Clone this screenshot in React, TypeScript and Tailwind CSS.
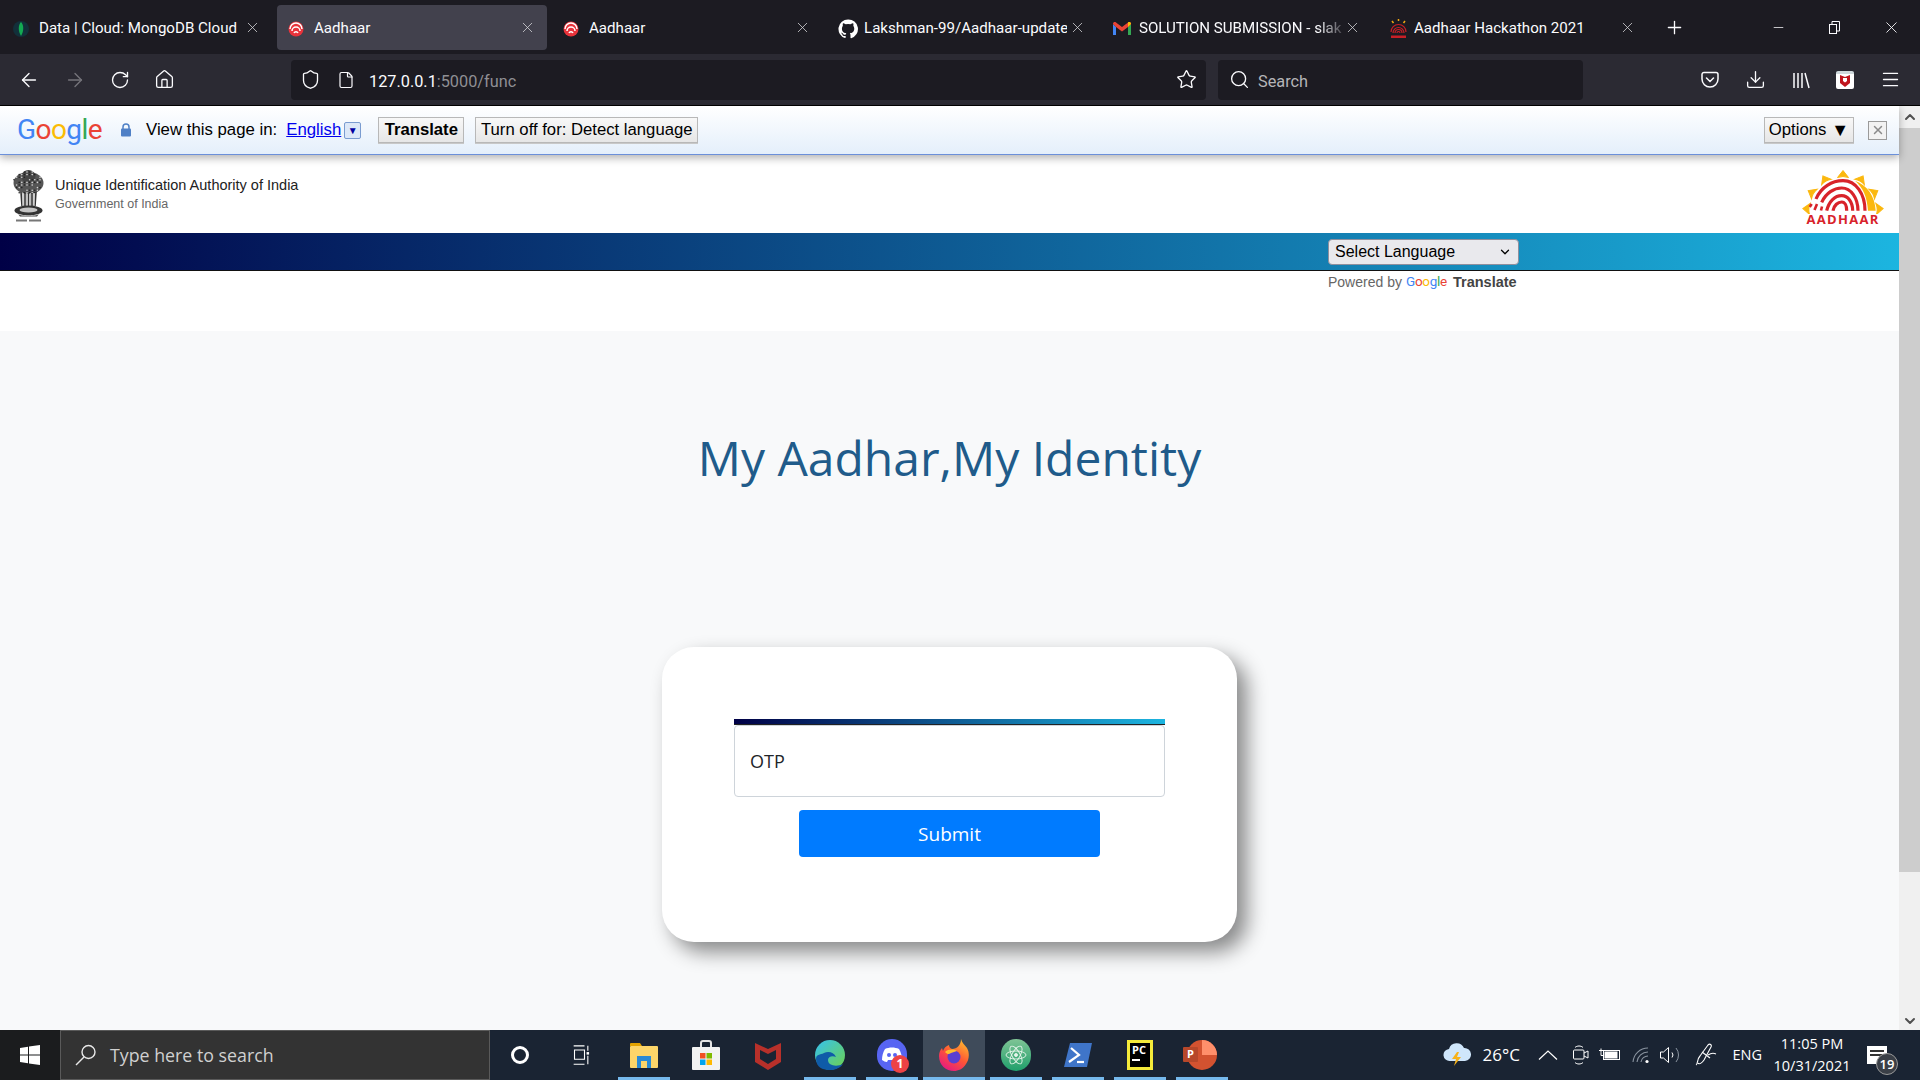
import React from "react";
import { ArrowLeft, ArrowRight, RotateCw, Home, Shield, File, Star, Search, X, Plus, Minus, Download, Menu, ChevronUp, ChevronDown } from "lucide-react";

const ui = "font-['Roboto',sans-serif]";
const arial = "font-['Liberation_Sans',Arial,sans-serif]";

function AadhaarFav() {
  return (
    <svg width="16" height="16" viewBox="0 0 16 16" fill="none">
      <circle cx="8" cy="8" r="7.5" fill="#e8333b" />
      <path d="M2 8a6 6 0 0 1 12 0M4 10a4 4 0 0 1 8 0M6 12a2.2 2.2 0 0 1 4 0" stroke="#fff" strokeWidth="1.5" />
    </svg>
  );
}
function Leaf() {
  return (
    <svg width="16" height="20" viewBox="0 0 16 20">
      <circle cx="8" cy="10" r="8" fill="#12303a" />
      <path d="M8 3c3 3 3 9 0 14c-3-5-3-11 0-14z" fill="#13aa52" />
    </svg>
  );
}
function GitHub() {
  return (
    <svg width="20" height="20" viewBox="0 0 24 24" fill="#fff">
      <path d="M12 .5a11.5 11.5 0 0 0-3.600 22.400c.600.100.800-.300.800-.600v-2c-3.200.700-3.900-1.500-3.900-1.500-.500-1.300-1.300-1.700-1.300-1.700-1-.700.100-.700.100-.700 1.200.100 1.800 1.200 1.800 1.200 1 1.800 2.800 1.300 3.400 1 .100-.800.400-1.300.700-1.600-2.600-.300-5.300-1.300-5.300-5.700 0-1.300.500-2.300 1.200-3.100-.100-.300-.500-1.500.100-3.100 0 0 1-.300 3.200 1.200a11 11 0 0 1 5.800 0c2.200-1.500 3.200-1.200 3.200-1.200.600 1.600.200 2.800.100 3.100.700.800 1.200 1.900 1.200 3.100 0 4.400-2.700 5.400-5.300 5.700.400.400.800 1.100.800 2.200v3.200c0 .300.200.700.800.600A11.500 11.500 0 0 0 12 .500z" />
    </svg>
  );
}
function Gmail() {
  return (
    <svg width="18" height="14" viewBox="0 0 18 14" fill="none">
      <path d="M0 2v11h3V5z" fill="#4285f4" />
      <path d="M15 5v8h3V2z" fill="#34a853" />
      <path d="M0 2c0-2 2-2.500 3-1.500L9 5l6-4.500c1-1 3-.5 3 1.500l-3 3-6 4.500L3 5z" fill="#ea4335" />
      <path d="M15 .5c1-1 3-.5 3 1.500l-3 3z" fill="#fbbc04" />
    </svg>
  );
}
function AadhaarSmall() {
  return (
    <svg width="21" height="21" viewBox="0 0 21 21" fill="none">
      <path d="M10.500 1v2M4 3l1.500 2M17 3l-1.500 2" stroke="#f3a712" strokeWidth="1.500" />
      <path d="M3 14a7.500 7.500 0 0 1 15 0M5 15a5.500 5.500 0 0 1 11 0M7 15a3.500 3.500 0 0 1 7 0M9 15a1.500 1.500 0 0 1 3 0" stroke="#c81f26" strokeWidth="1.200" />
      <rect x="3" y="17.500" width="15" height="2.500" fill="#c81f26" />
    </svg>
  );
}

const tabs: { icon: React.ReactNode; title: string; active?: boolean; fade?: boolean }[] = [
  { icon: <Leaf />, title: "Data | Cloud: MongoDB Cloud" },
  { icon: <AadhaarFav />, title: "Aadhaar", active: true },
  { icon: <AadhaarFav />, title: "Aadhaar" },
  { icon: <GitHub />, title: "Lakshman-99/Aadhaar-update" },
  { icon: <Gmail />, title: "SOLUTION SUBMISSION - slaks", fade: true },
  { icon: <AadhaarSmall />, title: "Aadhaar Hackathon 2021" },
];

function Tab({ icon, title, active, fade }: { icon: React.ReactNode; title: string; active?: boolean; fade?: boolean }) {
  return (
    <div className={`mr-[5px] flex h-[45px] w-[270px] shrink-0 items-center rounded-[4px] pl-[11px] pr-[11px] pt-[3px] ${active ? "bg-[#42414d]" : ""}`}>
      <span className="flex w-[26px] shrink-0 items-center justify-start">{icon}</span>
      <span className={`min-w-0 flex-1 overflow-hidden whitespace-nowrap text-[15.100px] text-[#fbfbfe] ${fade ? "[mask-image:linear-gradient(to_right,black_88%,rgba(0,0,0,0.2))]" : ""}`}>{title}</span>
      <X size={17} strokeWidth={1.100} className="-mt-[3px] ml-[2px] shrink-0 text-[#d8d8dc]" />
    </div>
  );
}

function Tabs() {
  return (
    <div className={`flex h-[54px] shrink-0 items-center bg-[#1c1b22] pl-[2px] ${ui}`}>
      {tabs.map((t, i) => (
        <Tab key={i} {...t} />
      ))}
      <Plus size={21} strokeWidth={1.500} className="ml-[12px] text-[#fbfbfe]" />
      <div className="ml-auto flex items-center text-[#fbfbfe]">
        <span className="flex w-[56px] justify-center"><Minus size={15} strokeWidth={1.200} /></span>
        <span className="flex w-[56px] justify-center">
          <svg width="13" height="13" viewBox="0 0 13 13" fill="none" stroke="#fbfbfe"><rect x="1.500" y="3.500" width="7" height="9" /><path d="M4 3V.5h7.500V10H9" /></svg>
        </span>
        <span className="flex w-[58px] justify-center"><X size={19} strokeWidth={1.100} /></span>
      </div>
    </div>
  );
}

function Pocket() {
  return (
    <svg width="20" height="20" viewBox="0 0 20 20" fill="none" stroke="#fbfbfe" strokeWidth="1.500">
      <path d="M2 4.500A2 2 0 0 1 4 2.500h12a2 2 0 0 1 2 2V9a8 8 0 0 1-16 0z" />
      <path d="M6.500 8l3.500 3.500L13.500 8" strokeLinecap="round" />
    </svg>
  );
}

function Toolbar() {
  return (
    <div className={`flex h-[52px] shrink-0 items-center border-b border-black bg-[#2b2a33] ${ui}`}>
      <div className="flex w-[291px] shrink-0 items-center text-[#fbfbfe]">
        <span className="flex w-[58px] justify-center"><ArrowLeft size={22} strokeWidth={1.500} /></span>
        <span className="ml-[2px] flex w-[30px] justify-center text-[#75747b]"><ArrowRight size={22} strokeWidth={1.500} /></span>
        <span className="ml-[15px] flex w-[30px] justify-center"><RotateCw size={20} strokeWidth={1.600} /></span>
        <span className="ml-[14px] flex w-[30px] justify-center"><Home size={21} strokeWidth={1.500} /></span>
      </div>
      <div className="flex h-[40px] w-[915px] shrink-0 items-center rounded-[4px] bg-[#1c1b22] pl-[9px] pr-[9px]">
        <Shield size={21} strokeWidth={1.500} className="text-[#fbfbfe]" />
        <File size={18} strokeWidth={1.600} className="ml-[16px] text-[#fbfbfe]" />
        <span className="ml-[14px] pt-[5px] text-[16.300px] text-[#fbfbfe]">127.0.0.1<span className="text-[#8f8f94]">:5000/func</span></span>
        <Star size={21} strokeWidth={1.500} className="ml-auto text-[#fbfbfe]" />
      </div>
      <div className="ml-[12px] flex h-[40px] w-[365px] shrink-0 items-center rounded-[4px] bg-[#1c1b22] pl-[11px]">
        <Search size={21} strokeWidth={1.500} className="text-[#fbfbfe]" />
        <span className="ml-[8px] pt-[5px] text-[16.300px] text-[#b5b5b8]">Search</span>
      </div>
      <div className="ml-[117px] flex items-center text-[#fbfbfe]">
        <Pocket />
        <Download size={21} strokeWidth={1.500} className="ml-[25px]" />
        <svg className="ml-[25px]" width="20" height="20" viewBox="0 0 20 20" fill="none" stroke="#fbfbfe" strokeWidth="1.500"><path d="M3 3v15M7 3v15M11 3v15M14 3l4 15" /></svg>
        <span className="ml-[25px] flex h-[18px] w-[18px] items-center justify-center rounded-[2px] border-t-[3px] border-[#cfd8dc] bg-white">
          <svg width="12" height="12" viewBox="0 0 12 12"><path d="M1 0l5 2 5-2v8l-5 4-5-4z" fill="#c0141d" /><path d="M4 3h4v3l-2 1.500L4 6z" fill="#fff" /></svg>
        </span>
        <Menu size={21} strokeWidth={1.500} className="ml-[26px]" />
      </div>
    </div>
  );
}

function GoogleWord({ size }: { size: string }) {
  return (
    <span className={`${size} tracking-[-0.02em] font-['Roboto',sans-serif]`}>
      <span className="text-[#4285f4]">G</span>
      <span className="text-[#ea4335]">o</span>
      <span className="text-[#fbbc05]">o</span>
      <span className="text-[#4285f4]">g</span>
      <span className="text-[#34a853]">l</span>
      <span className="text-[#ea4335]">e</span>
    </span>
  );
}

const tbtn = "flex h-[26px] items-center justify-center border border-[#b8b8b8] bg-[linear-gradient(to_bottom,#f8f8f8,#e6e6e6)] text-[16.700px] text-black shadow-[0_1px_0_#c8c8c8]";

function TranslateBar() {
  return (
    <div className={`relative z-10 flex h-[49px] shrink-0 items-center border-b border-[#6b90da] bg-[linear-gradient(to_bottom,#ffffff,#e4effb)] pl-[17px] shadow-[0_3px_8px_rgba(0,0,0,0.3)] ${arial}`}>
      <span className="flex w-[85px] justify-start leading-none"><GoogleWord size="text-[28px]" /></span>
      <svg className="ml-[18px]" width="12" height="14" viewBox="0 0 12 14"><rect x="1" y="5.500" width="10" height="8" rx="1" fill="#4f80c6" /><path d="M3 6V4a3 3 0 0 1 6 0v2" fill="none" stroke="#4f80c6" strokeWidth="1.500" /></svg>
      <span className="ml-[14px] text-[16.800px] text-black">View this page in:</span>
      <span className="ml-[9px] text-[16.800px] text-[#0000ee] underline">English</span>
      <span className="ml-[3px] flex h-[17px] w-[17px] items-center justify-center rounded-[2px] border border-[#7a9cd0] bg-[#dce8f8] text-[10px] text-[#0000a0]">▼</span>
      <div className={`${tbtn} ml-[17px] w-[86px] font-bold`}>Translate</div>
      <div className={`${tbtn} ml-[11px] w-[223px]`}>Turn off for: Detect language</div>
      <div className={`${tbtn} ml-auto w-[90px] gap-[5px]`}>Options<span className="text-[18px] leading-none">▼</span></div>
      <span className="ml-[14px] mr-[12px] flex h-[19px] w-[19px] items-center justify-center border border-[#9a9a9a] bg-[#f2f2f2]">
        <X size={14} strokeWidth={2.500} className="text-[#8a8a8a]" />
      </span>
    </div>
  );
}

function Emblem() {
  const dots: [number, number][] = [];
  for (let y = 2; y < 25; y += 2.6) {
    for (let x = 1; x < 30; x += 2.6) {
      const dx = x - 15;
      const inside = Math.abs(dx) < 14.5 - Math.max(0, 9 - y) * 1.2 && Math.abs(dx) < 14.5 - Math.max(0, y - 14) * 0.6;
      if (inside && (Math.round(x * 7 + y * 13) % 3 !== 0)) dots.push([x, y]);
    }
  }
  return (
    <svg width="31" height="54" viewBox="0 0 31 54" fill="none">
      <ellipse cx="15.500" cy="13" rx="15" ry="11" fill="#555" />
      <ellipse cx="15.500" cy="6.500" rx="7" ry="6.500" fill="#444" />
      {dots.map(([x, y], i) => (
        <circle key={i} cx={x} cy={y} r="0.800" fill={i % 2 ? "#d5d5d5" : "#222"} />
      ))}
      <path d="M8 22l1 14M12 23v13M15.500 23v13M19 23v13M23 22l-1 14" stroke="#333" strokeWidth="1.600" />
      <path d="M10 23v13M13.800 23v13M17.300 23v13M21 23v13" stroke="#bbb" strokeWidth="1.400" />
      <ellipse cx="15.500" cy="40.500" rx="14" ry="5" fill="#333" />
      <ellipse cx="15.500" cy="40" rx="9" ry="2.500" fill="#c4c4c4" />
      <path d="M5 44c3 2.500 18 2.500 21 0l-2 2.500H7z" fill="#444" />
      <rect x="3" y="49.500" width="11" height="2" fill="#777" />
      <rect x="16" y="49.500" width="12" height="2" fill="#777" />
    </svg>
  );
}

function AadhaarLogo() {
  const rays = [-87, -60, -30, 0, 30, 60, 87];
  return (
    <div className="relative h-[58px] w-[84px]">
      <svg width="84" height="46" viewBox="0 0 84 46" fill="none">
        {rays.map((a) => (
          <path key={a} d="M36.500 9.500L42 2.500L47.500 9.500Q42 7.500 36.500 9.500z" transform={`rotate(${a} 42 42.700)`} fill="#fbb80f" stroke="#fbb80f" strokeWidth="1" />
        ))}
        <path d="M54 12.700C66 17 74 28 74.700 42.700H67C66 28 62 20 54 12.700z" fill="#fbb80f" />
        <g stroke="#d8232a" strokeWidth="3.200">
          <path d="M15 31C20 19 31 12.700 42 12.700C55 12.700 64 26 64 42.700" />
          <path d="M20.700 34.300C25 25 33 20 40.700 20C50 20 57 30 57 42.700" />
          <path d="M25.700 42.700C28 33 34 27.700 40.700 27.700C47 27.700 51.700 34 51.700 42.700" />
          <path d="M32 42.700C33 37 37 34 40.700 34C44 34 45.700 38 45.700 42.700" />
          <path d="M10.700 36l-2 3M16 36l-2.500 6M21 38.500l-1 4" strokeWidth="2.600" />
        </g>
      </svg>
      <span className="absolute bottom-0 left-0 w-full text-center text-[13px] font-bold leading-none tracking-[1.300px] text-[#d8232a] font-['Open_Sans',sans-serif]">AADHAAR</span>
    </div>
  );
}

function SiteHeader() {
  return (
    <div className="flex h-[78px] shrink-0 items-center justify-between bg-white pl-[13px] pr-[14px] pt-[6px]">
      <div className="flex items-center">
        <Emblem />
        <div className={`-mt-[6px] ml-[11px] ${arial}`}>
          <div className="text-[14.500px] leading-[18px] text-[#222]">Unique Identification Authority of India</div>
          <div className="mt-[2px] text-[12.500px] leading-[16px] text-[#666]">Government of India</div>
        </div>
      </div>
      <AadhaarLogo />
    </div>
  );
}

function LangBar() {
  return (
    <>
      <div className={`flex h-[38px] shrink-0 items-center border-b border-[#111] bg-[linear-gradient(to_right,#000046,#1cb5e0)] pl-[1328px] ${arial}`}>
        <div className="flex h-[26px] w-[191px] items-center justify-between rounded-[4px] border border-[#8f8f9d] bg-[#e9e9ed] pl-[6px] pr-[6px] text-[16px] text-black">
          Select Language
          <ChevronDown size={14} strokeWidth={2.200} />
        </div>
      </div>
      <div className={`flex h-[60px] shrink-0 items-start bg-white pl-[1328px] pt-[1px] text-[14px] ${arial}`}>
        <span className="text-[#666]">Powered by</span>
        <span className="ml-[4px] leading-[18px]"><GoogleWord size="text-[13.500px]" /></span>
        <span className="ml-[6px] text-[14.500px] font-bold text-[#444]">Translate</span>
      </div>
    </>
  );
}

function Card() {
  return (
    <div className="mx-auto h-[295px] w-[575px] rounded-[32px] bg-white px-[72px] pt-[72px] shadow-[10px_10px_20px_rgba(0,0,0,0.45)]">
      <div className="h-[6px] border-b border-[#222] bg-[linear-gradient(to_right,#000046,#1cb5e0)]" />
      <div className="flex h-[72px] items-center rounded-[4px] border border-[#ced4da] bg-white pl-[15px] text-[18px] text-[#212529] font-['Open_Sans',sans-serif]">OTP</div>
      <button className="mx-auto mt-[13px] block h-[47px] w-[301px] rounded-[4px] bg-[#007bff] pt-[2px] text-[19px] text-white font-['Open_Sans',sans-serif]">Submit</button>
    </div>
  );
}

function Scrollbar() {
  return (
    <div className="flex w-[21px] shrink-0 flex-col items-center bg-[#f0f0f0]">
      <ChevronUp size={16} strokeWidth={3} className="mt-[3px] mb-[3px] text-[#505050]" />
      <div className="h-[744px] w-full bg-[#cdcdcd]" />
      <ChevronDown size={16} strokeWidth={3} className="mb-[1px] mt-auto text-[#505050]" />
    </div>
  );
}

function TIcon({ children, bar, active }: { children: React.ReactNode; bar?: boolean; active?: boolean }) {
  return (
    <div className={`relative flex h-[50px] w-[62px] shrink-0 items-center justify-center ${active ? "bg-[#3f4b5a]" : ""}`}>
      {children}
      {bar && <span className={`absolute bottom-0 h-[3px] bg-[#76b9ed] ${active ? "left-0 right-0" : "left-[5px] right-[5px]"}`} />}
    </div>
  );
}

function Taskbar() {
  return (
    <div className="flex h-[50px] shrink-0 items-center bg-[#1a2433] text-white font-['Open_Sans',sans-serif]">
      <div className="flex h-full w-[60px] shrink-0 items-center justify-center bg-[#1b1c1e]">
        <svg width="20" height="20" viewBox="0 0 20 20" fill="#fff"><path d="M0 3l8-1.200V9.500H0zM9 1.600L20 0v9.500H9zM0 10.500h8v7.700L0 17zM9 10.500h11V20L9 18.400z" /></svg>
      </div>
      <div className="flex h-full w-[430px] shrink-0 items-center border border-[#5a5a5a] bg-[#333333] pl-[13px]">
        <svg width="24" height="24" viewBox="0 0 24 24" fill="none" stroke="#e8e8e8" strokeWidth="1.400"><circle cx="14.500" cy="9" r="6.500" /><path d="M10 14L2 22" /></svg>
        <span className="ml-[12px] text-[17.800px] text-[#d0d0d0]">Type here to search</span>
      </div>
      <div className="-ml-[1px] flex">
        <TIcon><span className="h-[18px] w-[18px] rounded-full border-[3px] border-white" /></TIcon>
        <TIcon>
          <svg width="20" height="20" viewBox="0 0 20 24" fill="none" stroke="#fff" strokeWidth="1.300"><path d="M0 1h13M0 23h13M1 6h12v11H1zM17 1v6M17 13v10" /><rect x="15.500" y="8.500" width="3" height="3" fill="#fff" stroke="none" /></svg>
        </TIcon>
        <TIcon bar>
          <svg width="28" height="26" viewBox="0 0 28 26"><path d="M0 2a1 1 0 0 1 1-1h9l2 3h-12z" fill="#e2a200" /><rect y="4" width="28" height="22" rx="1" fill="#fcd569" /><path d="M7 14h14v12h-4v-7h-6v7H7z" fill="#2a8ad4" /></svg>
        </TIcon>
        <TIcon>
          <svg width="28" height="30" viewBox="0 0 28 30"><path d="M9 7V3a2 2 0 0 1 2-2h6a2 2 0 0 1 2 2v4" fill="none" stroke="#e5e5e5" strokeWidth="2" /><rect y="7" width="28" height="23" rx="1" fill="#f2f2f2" /><rect x="8" y="13" width="5.500" height="5.500" fill="#f25022" /><rect x="14.500" y="13" width="5.500" height="5.500" fill="#7fba00" /><rect x="8" y="19.500" width="5.500" height="5.500" fill="#00a4ef" /><rect x="14.500" y="19.500" width="5.500" height="5.500" fill="#ffb900" /></svg>
        </TIcon>
        <TIcon>
          <svg width="26" height="30" viewBox="0 0 26 30"><path d="M0 3l13 6 13-6v19l-13 8-13-8z" fill="#b8302a" /><path d="M5 10l8 4 8-4v9l-8 5-8-5z" fill="#1a2433" /></svg>
        </TIcon>
        <TIcon bar>
          <svg width="30" height="32" viewBox="0 0 30 30">
            <defs><linearGradient id="e1" x1="0" y1="0" x2="1" y2="1"><stop offset="0" stopColor="#35c1f1" /><stop offset="1" stopColor="#6ed24b" /></linearGradient></defs>
            <circle cx="15" cy="15" r="15" fill="url(#e1)" />
            <path d="M1 19C1 28 9 30 15 30c5 0 10-2 13-6-6 3-15 2-15-4 0-3 4-5 8-3-2-5-8-6-12-4C5 15 1 14 1 19z" fill="#0f5ba8" />
          </svg>
        </TIcon>
        <TIcon bar>
          <span className="relative block h-[32px] w-[30px] rounded-full bg-[#5865f2]">
            <svg className="absolute left-[5px] top-[8px]" width="20" height="15" viewBox="0 0 20 15"><path d="M3 2c4-2 10-2 14 0 2 3 3 7 3 11-2 1-3 2-5 2l-1-2H6l-1 2c-2 0-3-1-5-2 0-4 1-8 3-11z" fill="#fff" /><circle cx="7" cy="8" r="2" fill="#5865f2" /><circle cx="13" cy="8" r="2" fill="#5865f2" /></svg>
            <span className="absolute -right-[2px] -bottom-[2px] flex h-[18px] w-[18px] items-center justify-center rounded-full bg-[#ed4245] text-[12px] font-bold leading-none">1</span>
          </span>
        </TIcon>
        <TIcon bar active>
          <svg width="30" height="32" viewBox="0 0 30 32">
            <defs><linearGradient id="f1" x1="0.800" y1="0" x2="0.200" y2="1"><stop offset="0" stopColor="#ffbd2e" /><stop offset="0.500" stopColor="#ff5634" /><stop offset="1" stopColor="#e31587" /></linearGradient></defs>
            <path d="M22 0c1 4 4 6 6 9 3 5 2 12-1 16-3 5-8 7-12 7C7 32 0 26 0 17c0-3 1-6 3-8l1 3c1-3 3-5 6-6 0 2 1 3 3 4 5 0 9-4 9-10z" fill="url(#f1)" />
            <circle cx="15" cy="18" r="6.500" fill="#5b3fd1" />
            <path d="M6 13c3-3 9-3 12-1l-6 2c-2 1-3 2-6-1z" fill="#ffbd2e" />
          </svg>
        </TIcon>
        <TIcon bar>
          <span className="flex h-[32px] w-[30px] items-center justify-center rounded-full bg-[linear-gradient(to_bottom,#7fc495,#1f9f6b)]">
            <svg width="22" height="22" viewBox="0 0 22 22" fill="none" stroke="#e8f5ec" strokeWidth="0.900"><ellipse cx="11" cy="11" rx="10" ry="4" transform="rotate(60 11 11)" /><ellipse cx="11" cy="11" rx="10" ry="4" transform="rotate(-60 11 11)" /><ellipse cx="11" cy="11" rx="10" ry="4" /><circle cx="11" cy="11" r="1.500" fill="#e8f5ec" /></svg>
          </span>
        </TIcon>
        <TIcon bar>
          <svg width="28" height="24" viewBox="0 0 28 24"><path d="M6 0h22l-5 24H0z" fill="#3f75c9" /><path d="M7 5l8 7-10 7" fill="none" stroke="#fff" strokeWidth="2.200" /><path d="M13 19h7" stroke="#fff" strokeWidth="2.200" /></svg>
        </TIcon>
        <TIcon bar>
          <span className="flex h-[30px] w-[26px] items-center justify-center bg-[#f4ea3a] p-[3px]">
            <span className="flex h-full w-full flex-col bg-black pl-[2px] text-[11px] font-bold leading-[13px] text-white">
              PC
              <span className="mt-[3px] h-[1.500px] w-[8px] bg-white" />
            </span>
          </span>
        </TIcon>
        <TIcon bar>
          <span className="relative block h-[30px] w-[30px] rounded-full bg-[#d35230]">
            <span className="absolute left-[15px] top-0 h-[15px] w-[15px] rounded-tr-full bg-[#ff8f6b]" />
            <span className="absolute -left-[4px] top-[7px] flex h-[15px] w-[15px] items-center justify-center rounded-[1px] bg-[#b7472a] text-[11px] font-bold">P</span>
          </span>
        </TIcon>
      </div>

      <div className="ml-auto flex h-full items-center">
        <svg width="28" height="24" viewBox="0 0 28 24"><path d="M7 18a6 6 0 0 1-1-12 8 8 0 0 1 15-1 6.500 6.500 0 0 1 1 13z" fill="#cfe6fb" /><path d="M14 9l-5 7h4l-2 7 7-9h-4l2-5z" fill="#f7b21a" /></svg>
        <span className="ml-[11px] w-[42px] text-[17px]">26°C</span>
        <svg className="ml-[14px]" width="20" height="12" viewBox="0 0 20 12" fill="none" stroke="#fff" strokeWidth="1.200"><path d="M1 10.500L10 2l9 8.500" /></svg>
        <svg className="ml-[14px]" width="18" height="22" viewBox="0 0 18 22" fill="none" stroke="#fff" strokeWidth="1"><rect x="1.500" y="6" width="10.500" height="9" rx="1" /><path d="M12 9l4-2v7l-4-2" /><path d="M3 3.500c2-2 6-2 8 0M3 18.500c2 2 6 2 8 0" /></svg>
        <svg className="ml-[8px]" width="22" height="14" viewBox="0 0 22 14" fill="none" stroke="#fff"><path d="M1 2.500h4M3 .5v4M3 4.500v3h3" /><rect x="5.500" y="2.500" width="16" height="9" /><rect x="7" y="4" width="12" height="6" fill="#fff" /></svg>
        <svg className="ml-[12px]" width="18" height="18" viewBox="0 0 18 18" fill="none" stroke="#8a94a0" strokeWidth="1.100"><path d="M1 16A15 15 0 0 1 16 2M5 16A11 11 0 0 1 16 6M9 16a7 7 0 0 1 7-6" /><circle cx="15" cy="15.500" r="1.600" fill="#fff" stroke="none" /></svg>
        <svg className="ml-[9px]" width="22" height="20" viewBox="0 0 22 20" fill="none" stroke="#fff" strokeWidth="1"><path d="M1.500 7v6h3l5 4.500V2.500L4.500 7z" /><path d="M13 7.500a4 4 0 0 1 0 5" /><path d="M17 3a11 11 0 0 1 0 14" stroke="#8a94a0" /></svg>
        <svg className="ml-[13px]" width="24" height="24" viewBox="0 0 24 24" fill="none" stroke="#fff" strokeWidth="1.100"><path d="M2 22c2-1 1-6 4-9l8-11c2-2 4 0 3 2L10 17c-2 3-5 5-6 3" /><path d="M14 12c3-2 6-2 8-1" /><path d="M8 9l8 6" /></svg>
        <span className="ml-[14px] text-[14.500px]">ENG</span>
        <div className="ml-[11px] w-[78px] text-center text-[14.500px] leading-[22px]">
          <div>11:05 PM</div>
          <div>10/31/2021</div>
        </div>
        <span className="relative ml-[16px] mr-[33px] block h-[18px] w-[20px] bg-white">
          <span className="absolute left-[3px] top-[4px] h-[1.500px] w-[14px] bg-[#333]" />
          <span className="absolute left-[3px] top-[8px] h-[1.500px] w-[14px] bg-[#333]" />
          <span className="absolute -right-[11px] -bottom-[11px] flex h-[22px] w-[22px] items-center justify-center rounded-full border border-[#999] bg-[#3a3f47] text-[13px] font-semibold leading-none">19</span>
        </span>
      </div>
    </div>
  );
}

export default function App() {
  return (
    <div className="flex h-[1080px] w-[1920px] flex-col overflow-hidden bg-[#f8f9fa]">
      <Tabs />
      <Toolbar />
      <div className="flex min-h-0 flex-1">
        <div className="flex min-w-0 flex-1 flex-col">
          <TranslateBar />
          <SiteHeader />
          <LangBar />
          <main className="flex-1">
            <h1 className="mt-[90px] text-center text-[48px] font-normal leading-[74px] text-[#205b8a] font-['Open_Sans',sans-serif]">My Aadhar,My Identity</h1>
            <div className="mt-[152px]"><Card /></div>
          </main>
        </div>
        <Scrollbar />
      </div>
      <Taskbar />
    </div>
  );
}
